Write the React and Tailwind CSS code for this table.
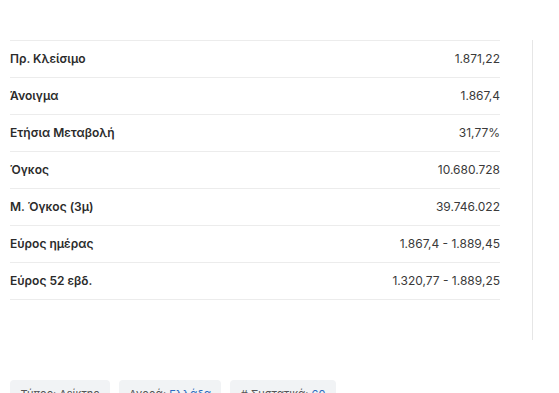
import React from "react";

const rows = [
  ["Πρ. Κλείσιμο", "1.871,22"],
  ["Άνοιγμα", "1.867,4"],
  ["Ετήσια Μεταβολή", "31,77%"],
  ["Όγκος", "10.680.728"],
  ["Μ. Όγκος (3μ)", "39.746.022"],
  ["Εύρος ημέρας", "1.867,4 - 1.889,45"],
  ["Εύρος 52 εβδ.", "1.320,77 - 1.889,25"],
];

const App = () => {
  return (
    <div
      className="w-[559px] h-[393px] overflow-hidden bg-white text-[#333]"
      style={{ fontFamily: "Inter, 'Noto Sans', sans-serif" }}
    >
      <div className="flex pt-[40px]">
        {/* Key stats table */}
        <div className="ml-[10px] w-[490px]">
          <div className="border-t border-[#ececec]">
            {rows.map(([label, value]) => (
              <div
                key={label}
                className="h-[37px] flex items-center justify-between border-b border-[#ececec]"
              >
                <span className="text-[12px] font-semibold text-[#2b2b2b]">{label}</span>
                <span className="text-[12px] text-[#3a3a3a]">{value}</span>
              </div>
            ))}
          </div>
        </div>

        {/* Right side panel edge */}
        <div className="ml-[32px] h-[300px] border-l border-[#e6e6e6]" />
      </div>

      {/* Tags */}
      <div className="flex gap-[9px] ml-[10px] mt-[40px]">
        <div className="w-[100px] h-[30px] rounded-[4px] bg-[#f1f3f5] pt-[6px] text-center text-[11px] text-[#555]">
          Τύπος: Δείκτης
        </div>
        <div className="w-[102px] h-[30px] rounded-[4px] bg-[#f1f3f5] pt-[6px] text-center text-[11px] text-[#555]">
          Αγορά: <span className="text-[#2d6cc0]">Ελλάδα</span>
        </div>
        <div className="w-[106px] h-[30px] rounded-[4px] bg-[#f1f3f5] pt-[6px] text-center text-[11px] text-[#555]">
          # Συστατικά: <span className="text-[#2d6cc0]">60</span>
        </div>
      </div>
    </div>
  );
};

export default App;
